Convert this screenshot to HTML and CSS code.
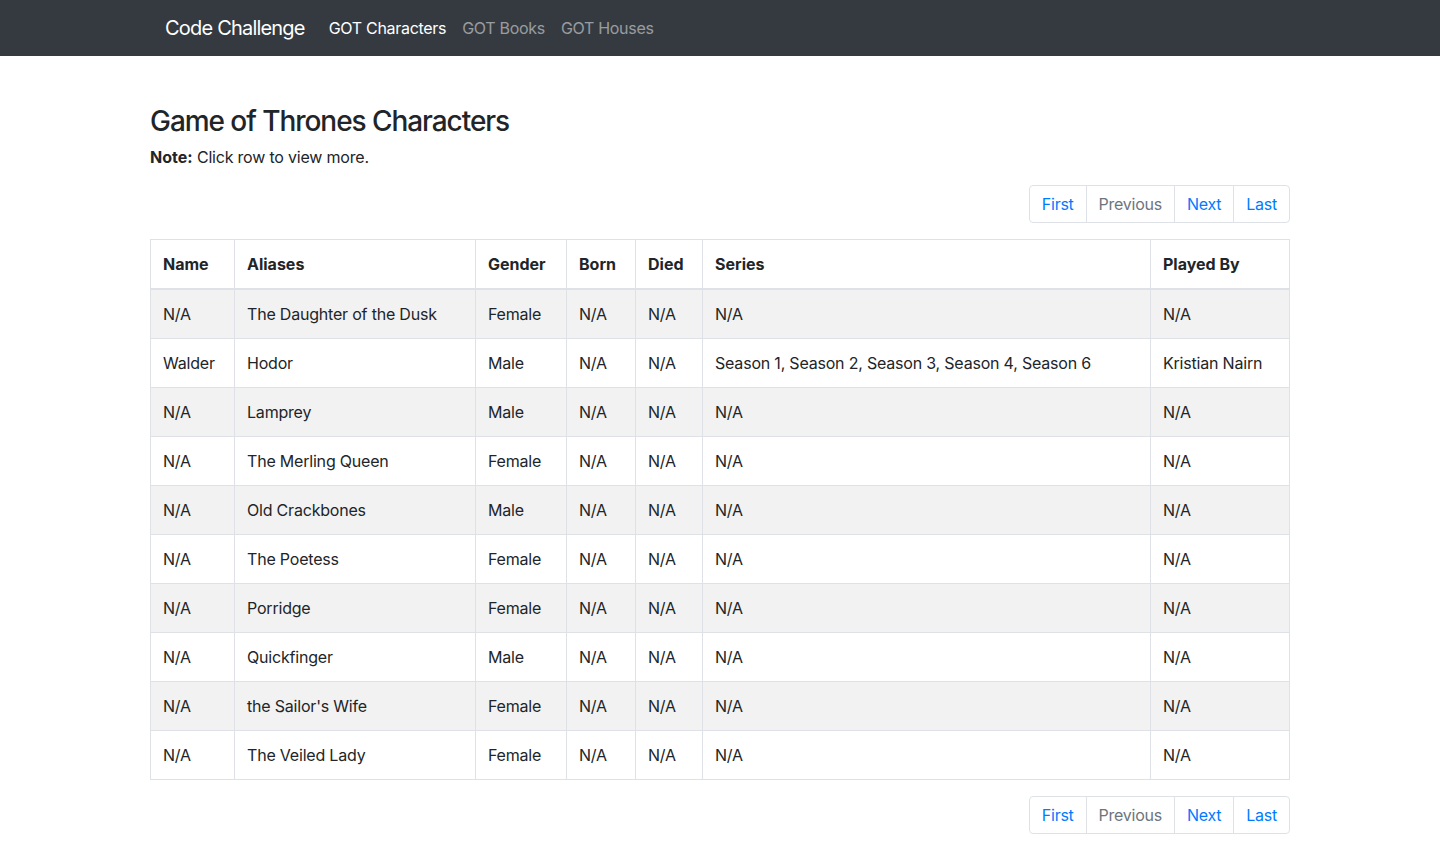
FILE: index.html
```html
<!DOCTYPE html>
<html lang="en">
<head>
<meta charset="utf-8">
<title>Code Challenge</title>
<link rel="stylesheet" href="styles.css">
</head>
<body>
<nav class="navbar">
  <div class="nav-inner">
    <a class="brand" href="#">Code Challenge</a>
    <ul class="nav-links">
      <li><a class="nav-link active" href="#">GOT Characters</a></li>
      <li><a class="nav-link" href="#">GOT Books</a></li>
      <li><a class="nav-link" href="#">GOT Houses</a></li>
    </ul>
  </div>
</nav>
<main class="container">
  <h3 class="title">Game of Thrones Characters</h3>
  <p class="note"><strong>Note:</strong> Click row to view more.</p>
  <ul class="pagination">
    <li class="page-item"><a class="page-link" href="#">First</a></li>
    <li class="page-item disabled"><span class="page-link">Previous</span></li>
    <li class="page-item"><a class="page-link" href="#">Next</a></li>
    <li class="page-item"><a class="page-link" href="#">Last</a></li>
  </ul>
  <table class="table">
    <colgroup>
      <col class="c-name"><col class="c-alias"><col class="c-gender"><col class="c-born"><col class="c-died"><col class="c-series"><col class="c-played">
    </colgroup>
    <thead>
      <tr><th>Name</th><th>Aliases</th><th>Gender</th><th>Born</th><th>Died</th><th>Series</th><th>Played By</th></tr>
    </thead>
    <tbody>
      <tr><td>N/A</td><td>The Daughter of the Dusk</td><td>Female</td><td>N/A</td><td>N/A</td><td>N/A</td><td>N/A</td></tr>
      <tr><td>Walder</td><td>Hodor</td><td>Male</td><td>N/A</td><td>N/A</td><td>Season 1, Season 2, Season 3, Season 4, Season 6</td><td>Kristian Nairn</td></tr>
      <tr><td>N/A</td><td>Lamprey</td><td>Male</td><td>N/A</td><td>N/A</td><td>N/A</td><td>N/A</td></tr>
      <tr><td>N/A</td><td>The Merling Queen</td><td>Female</td><td>N/A</td><td>N/A</td><td>N/A</td><td>N/A</td></tr>
      <tr><td>N/A</td><td>Old Crackbones</td><td>Male</td><td>N/A</td><td>N/A</td><td>N/A</td><td>N/A</td></tr>
      <tr><td>N/A</td><td>The Poetess</td><td>Female</td><td>N/A</td><td>N/A</td><td>N/A</td><td>N/A</td></tr>
      <tr><td>N/A</td><td>Porridge</td><td>Female</td><td>N/A</td><td>N/A</td><td>N/A</td><td>N/A</td></tr>
      <tr><td>N/A</td><td>Quickfinger</td><td>Male</td><td>N/A</td><td>N/A</td><td>N/A</td><td>N/A</td></tr>
      <tr><td>N/A</td><td>the Sailor's Wife</td><td>Female</td><td>N/A</td><td>N/A</td><td>N/A</td><td>N/A</td></tr>
      <tr><td>N/A</td><td>The Veiled Lady</td><td>Female</td><td>N/A</td><td>N/A</td><td>N/A</td><td>N/A</td></tr>
    </tbody>
  </table>
  <ul class="pagination">
    <li class="page-item"><a class="page-link" href="#">First</a></li>
    <li class="page-item disabled"><span class="page-link">Previous</span></li>
    <li class="page-item"><a class="page-link" href="#">Next</a></li>
    <li class="page-item"><a class="page-link" href="#">Last</a></li>
  </ul>
</main>
</body>
</html>
```
FILE: styles.css
```css
* { box-sizing: border-box; }
html, body { margin: 0; padding: 0; }
body {
  font-family: Inter, "Noto Sans", "Liberation Sans", sans-serif;
  font-size: 16px;
  line-height: 1.5;
  color: #212529;
  background: #fff;
  letter-spacing: -0.2px;
}
a { text-decoration: none; }

.navbar {
  background: #343a40;
  height: 56px;
  padding: 8px 0;
}
.nav-inner {
  width: 1140px;
  margin: 0 auto;
  padding: 0 15px;
  display: flex;
  align-items: center;
  height: 40px;
}
.brand {
  color: #fff;
  font-size: 20px;
  line-height: 30px;
  padding: 5px 0;
  margin-right: 16px;
  white-space: nowrap;
  letter-spacing: -0.8px;
}
.nav-links {
  display: flex;
  list-style: none;
  margin: 0;
  padding: 0;
}
.nav-link {
  display: block;
  padding: 8px 8px;
  color: rgba(255,255,255,.5);
  line-height: 24px;
  letter-spacing: -0.3px;
}
.nav-link.active { color: #fff; }

.container {
  width: 1140px;
  margin: 0 auto;
  padding: 48px 0 16px;
}
.title {
  font-size: 28px;
  font-weight: 500;
  line-height: 31px;
  padding-top: 2px;
  margin: 0 0 8px;
  letter-spacing: -1.05px;
}
.note { margin: 0 0 16px; }
.note strong { font-weight: 700; letter-spacing: 0; }

.pagination {
  display: flex;
  justify-content: flex-end;
  list-style: none;
  margin: 0 0 16px;
  padding: 0;
}
.page-link {
  display: block;
  padding: 8px 12px;
  line-height: 20px;
  color: #007bff;
  border: 1px solid #dee2e6;
  margin-left: -1px;
  background: #fff;
  letter-spacing: -0.25px;
}
.page-item:first-child .page-link {
  margin-left: 0;
  border-radius: 4px 0 0 4px;
}
.page-item:last-child .page-link { border-radius: 0 4px 4px 0; }
.page-item.disabled .page-link { color: #6c757d; }

.table {
  width: 100%;
  border-collapse: collapse;
  table-layout: fixed;
  border: 1px solid #dee2e6;
  margin-bottom: 16px;
}
.c-name { width: 84px; }
.c-alias { width: 241px; }
.c-gender { width: 91px; }
.c-born { width: 69px; }
.c-died { width: 67px; }
.c-series { width: 448px; }
.c-played { width: 139px; }
.table th, .table td {
  padding: 12px;
  border: 1px solid #dee2e6;
  text-align: left;
  vertical-align: top;
  white-space: nowrap;
}
.table th {
  font-weight: 700;
  letter-spacing: 0;
  border-bottom: 2px solid #dee2e6;
}
.table tbody tr:nth-child(odd) { background: rgba(0,0,0,.05); }
```
